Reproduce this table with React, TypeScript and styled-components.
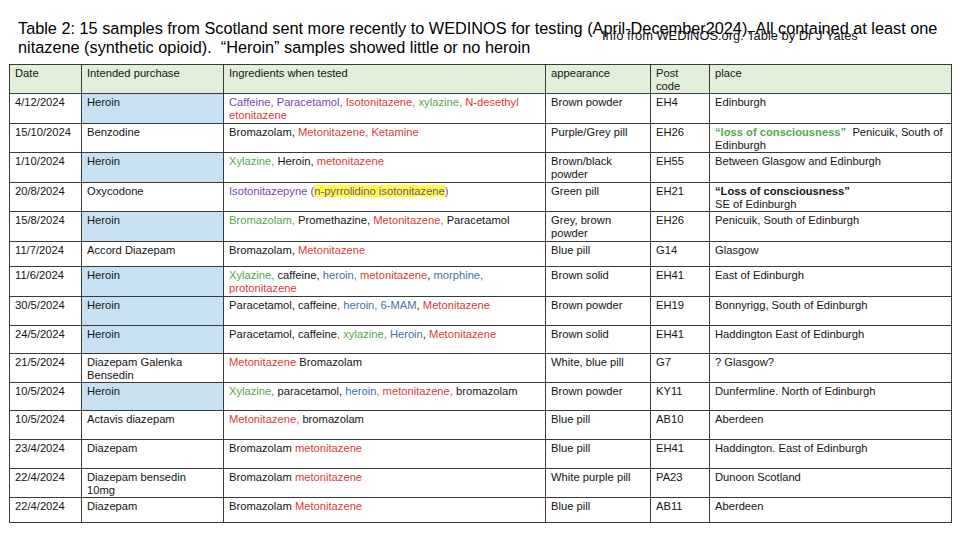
import React from "react";
import styled, { createGlobalStyle } from "styled-components";

const Global = createGlobalStyle`
  html, body { margin: 0; padding: 0; background: #fff; }
  body { font-family: "Liberation Sans", Arial, sans-serif; color: #111; }
`;

const C = {
  k: "#141414",
  p: "#7a48ae",
  r: "#e03a3a",
  g: "#55a64e",
  b: "#47729f",
  b2: "#2f6dc2",
} as const;

type Col = keyof typeof C;
type Seg = [Col, string, ("hl" | "bold")?];

const Page = styled.div`
  position: relative;
  width: 960px;
  height: 540px;
  box-sizing: border-box;
  padding: 19px 0 0 9px;
  overflow: hidden;
`;

const Title = styled.h1`
  margin: 0 0 7px 9px;
  font-family: "Liberation Sans", Arial, sans-serif;
  font-weight: 400;
  font-size: 16.3px;
  line-height: 19px;
  color: #000;
  width: 940px;
`;

const Credit = styled.div`
  position: absolute;
  left: 602px;
  top: 28px;
  font-size: 12.9px;
  line-height: 15px;
  color: #111;
  white-space: nowrap;
`;

const Table = styled.table`
  border-collapse: collapse;
  table-layout: fixed;
  width: 942px;
  border: 1.5px solid #333;
`;

const Row = styled.tr<{ $h: number }>`
  height: ${(p) => p.$h}px;
`;

const Cell = styled.td<{ $bg?: string }>`
  border: 1px solid #3a3a3a;
  padding: 2px 5px 0 5px;
  vertical-align: top;
  font-size: 11.2px;
  line-height: 13px;
  white-space: nowrap;
  overflow: hidden;
  color: ${C.k};
  background: ${(p) => p.$bg || "transparent"};
`;

const HeadCell = styled(Cell)`
  background: #e2efd9;
`;

const Span = styled.span<{ $c: string; $hl?: boolean; $bold?: boolean }>`
  color: ${(p) => p.$c};
  background: ${(p) => (p.$hl ? "#ffff3c" : "transparent")};
  font-weight: ${(p) => (p.$bold ? 700 : 400)};
`;

const BLUE_BG = "#c7e1f3";

type RowData = {
  h: number;
  date: string;
  purchase: string;
  heroin?: boolean;
  ing: Seg[];
  app: string;
  pc: string;
  place: Seg[];
};

const rows: RowData[] = [
  {
    h: 30, date: "4/12/2024", purchase: "Heroin", heroin: true,
    ing: [["p", "Caffeine, Paracetamol, "], ["r", "Isotonitazene, "], ["g", "xylazine, "], ["r", "N-desethyl\netonitazene"]],
    app: "Brown powder", pc: "EH4", place: [["k", "Edinburgh"]],
  },
  {
    h: 29, date: "15/10/2024", purchase: "Benzodine",
    ing: [["k", "Bromazolam, "], ["r", "Metonitazene, Ketamine"]],
    app: "Purple/Grey pill", pc: "EH26",
    place: [["g", "\u201closs of consciousness\u201d", "bold"], ["k", "\u00a0 Penicuik, South of\nEdinburgh"]],
  },
  {
    h: 30, date: "1/10/2024", purchase: "Heroin", heroin: true,
    ing: [["g", "Xylazine, "], ["k", "Heroin, "], ["r", "metonitazene"]],
    app: "Brown/black\npowder", pc: "EH55", place: [["k", "Between Glasgow and Edinburgh"]],
  },
  {
    h: 29, date: "20/8/2024", purchase: "Oxycodone",
    ing: [["p", "Isotonitazepyne ("], ["p", "n-pyrrolidino isotonitazene", "hl"], ["p", ")"]],
    app: "Green pill", pc: "EH21",
    place: [["k", "\u201cLoss of consciousness\u201d", "bold"], ["k", "\nSE of Edinburgh"]],
  },
  {
    h: 30, date: "15/8/2024", purchase: "Heroin", heroin: true,
    ing: [["g", "Bromazolam, "], ["k", "Promethazine, "], ["r", "Metonitazene, "], ["k", "Paracetamol"]],
    app: "Grey, brown\npowder", pc: "EH26", place: [["k", "Penicuik, South of Edinburgh"]],
  },
  {
    h: 25, date: "11/7/2024", purchase: "Accord Diazepam",
    ing: [["k", "Bromazolam, "], ["r", "Metonitazene"]],
    app: "Blue pill", pc: "G14", place: [["k", "Glasgow"]],
  },
  {
    h: 30, date: "11/6/2024", purchase: "Heroin", heroin: true,
    ing: [["g", "Xylazine, "], ["k", "caffeine, "], ["b", "heroin, "], ["r", "metonitazene"], ["k", ", "], ["b", "morphine,\n"], ["r", "protonitazene"]],
    app: "Brown solid", pc: "EH41", place: [["k", "East of Edinburgh"]],
  },
  {
    h: 29, date: "30/5/2024", purchase: "Heroin", heroin: true,
    ing: [["k", "Paracetamol, caffeine"], ["r", ", "], ["b", "heroin, 6-MAM"], ["k", ", "], ["r", "Metonitazene"]],
    app: "Brown powder", pc: "EH19", place: [["k", "Bonnyrigg, South of Edinburgh"]],
  },
  {
    h: 28, date: "24/5/2024", purchase: "Heroin", heroin: true,
    ing: [["k", "Paracetamol, caffeine"], ["r", ", "], ["g", "xylazine, "], ["b", "Heroin"], ["k", ", "], ["r", "Metonitazene"]],
    app: "Brown solid", pc: "EH41", place: [["k", "Haddington East of Edinburgh"]],
  },
  {
    h: 28, date: "21/5/2024", purchase: "Diazepam Galenka\nBensedin",
    ing: [["r", "Metonitazene"], ["k", " Bromazolam"]],
    app: "White, blue pill", pc: "G7", place: [["k", "? Glasgow?"]],
  },
  {
    h: 28, date: "10/5/2024", purchase: "Heroin", heroin: true,
    ing: [["g", "Xylazine"], ["r", ", "], ["k", "paracetamol, "], ["b2", "heroin"], ["r", ", metonitazene, "], ["k", "bromazolam"]],
    app: "Brown powder", pc: "KY11", place: [["k", "Dunfermline. North of Edinburgh"]],
  },
  {
    h: 29, date: "10/5/2024", purchase: "Actavis diazepam",
    ing: [["r", "Metonitazene, "], ["k", "bromazolam"]],
    app: "Blue pill", pc: "AB10", place: [["k", "Aberdeen"]],
  },
  {
    h: 29, date: "23/4/2024", purchase: "Diazepam",
    ing: [["k", "Bromazolam "], ["r", "metonitazene"]],
    app: "Blue pill", pc: "EH41", place: [["k", "Haddington. East of Edinburgh"]],
  },
  {
    h: 28, date: "22/4/2024", purchase: "Diazepam bensedin\n10mg",
    ing: [["k", "Bromazolam "], ["r", "metonitazene"]],
    app: "White purple pill", pc: "PA23", place: [["k", "Dunoon Scotland"]],
  },
  {
    h: 25, date: "22/4/2024", purchase: "Diazepam",
    ing: [["k", "Bromazolam "], ["r", "Metonitazene"]],
    app: "Blue pill", pc: "AB11", place: [["k", "Aberdeen"]],
  },
];

function Lines({ text }: { text: string }) {
  const parts = text.split("\n");
  return (
    <>
      {parts.map((t, i) => (
        <React.Fragment key={i}>
          {i > 0 && <br />}
          {t}
        </React.Fragment>
      ))}
    </>
  );
}

function Segs({ segs }: { segs: Seg[] }) {
  return (
    <>
      {segs.map(([c, t, f], i) => (
        <Span key={i} $c={C[c]} $hl={f === "hl"} $bold={f === "bold"}>
          <Lines text={t} />
        </Span>
      ))}
    </>
  );
}

const widths = [72, 142, 322, 105, 59, 242];

export default function App() {
  return (
    <Page>
      <Global />
      <Title>
        Table 2: 15 samples from Scotland sent more recently to WEDINOS for testing (April-December2024). All contained at least one nitazene (synthetic opioid).&nbsp; “Heroin” samples showed little or no heroin
      </Title>
      <Credit>Info from WEDINOS.org. Table by Dr J Yates</Credit>
      <Table>
        <colgroup>
          {widths.map((w, i) => (
            <col key={i} style={{ width: w }} />
          ))}
        </colgroup>
        <thead>
          <Row $h={29}>
            <HeadCell>Date</HeadCell>
            <HeadCell>Intended purchase</HeadCell>
            <HeadCell>Ingredients when tested</HeadCell>
            <HeadCell>appearance</HeadCell>
            <HeadCell>
              <Lines text={"Post\ncode"} />
            </HeadCell>
            <HeadCell>place</HeadCell>
          </Row>
        </thead>
        <tbody>
          {rows.map((r, i) => (
            <Row key={i} $h={r.h}>
              <Cell>{r.date}</Cell>
              <Cell $bg={r.heroin ? BLUE_BG : undefined}>
                <Lines text={r.purchase} />
              </Cell>
              <Cell>
                <Segs segs={r.ing} />
              </Cell>
              <Cell>
                <Lines text={r.app} />
              </Cell>
              <Cell>{r.pc}</Cell>
              <Cell>
                <Segs segs={r.place} />
              </Cell>
            </Row>
          ))}
        </tbody>
      </Table>
    </Page>
  );
}
